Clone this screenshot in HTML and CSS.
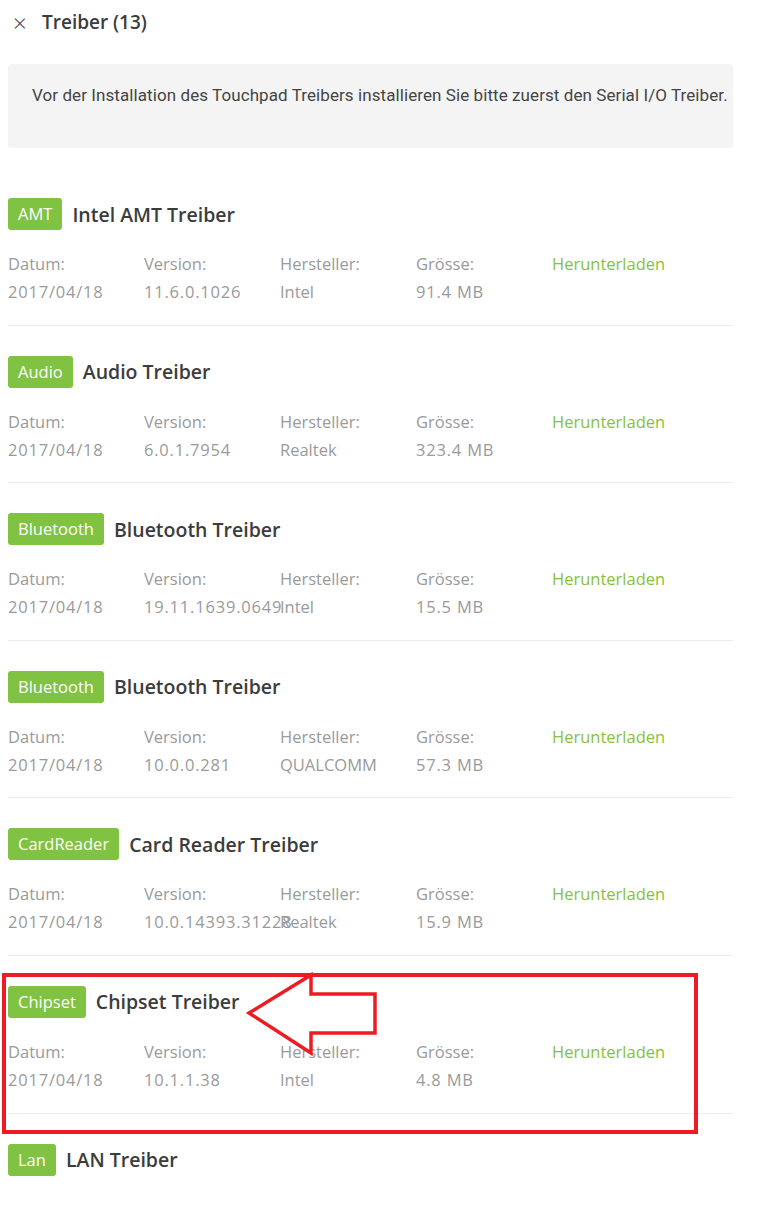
FILE: index.html
```html
<!DOCTYPE html>
<html lang="de">
<head>
    <meta charset="UTF-8">
    <meta name="viewport" content="width=device-width, initial-scale=1.0">
    <title>Treiber</title>
    <link rel="stylesheet" href="styles.css">
</head>
<body>
    <div class="container">
        <div class="header">
            <span class="close">&times;</span>
            <h1>Treiber (13)</h1>
        </div>

        <div class="notice">
            Vor der Installation des Touchpad Treibers installieren Sie bitte zuerst den Serial I/O Treiber.
        </div>

        <div id="driver-list"></div>
    </div>

    <!-- annotation overlay -->
    <svg class="annotation" width="770" height="1213" viewBox="0 0 770 1213">
        <rect x="4" y="975" width="692" height="157" fill="none" stroke="#ed1c24" stroke-width="4"/>
        <polygon points="249,1013 311,975 311,994 375,994 375,1033 311,1033 311,1053" fill="none" stroke="#ed1c24" stroke-width="3.5" stroke-linejoin="miter"/>
    </svg>

    <script>
        const drivers = [
            { tag: 'AMT', name: 'Intel AMT Treiber', date: '2017/04/18', version: '11.6.0.1026', vendor: 'Intel', size: '91.4 MB' },
            { tag: 'Audio', name: 'Audio Treiber', date: '2017/04/18', version: '6.0.1.7954', vendor: 'Realtek', size: '323.4 MB' },
            { tag: 'Bluetooth', name: 'Bluetooth Treiber', date: '2017/04/18', version: '19.11.1639.0649', vendor: 'Intel', size: '15.5 MB' },
            { tag: 'Bluetooth', name: 'Bluetooth Treiber', date: '2017/04/18', version: '10.0.0.281', vendor: 'QUALCOMM', size: '57.3 MB' },
            { tag: 'CardReader', name: 'Card Reader Treiber', date: '2017/04/18', version: '10.0.14393.31228', vendor: 'Realtek', size: '15.9 MB' },
            { tag: 'Chipset', name: 'Chipset Treiber', date: '2017/04/18', version: '10.1.1.38', vendor: 'Intel', size: '4.8 MB' },
            { tag: 'Lan', name: 'LAN Treiber' } // details below the fold
        ];

        function renderMeta(d) {
            if (!d.date) return '';
            return `
                <div class="meta">
                    <span class="label">Datum:</span>
                    <span class="label">Version:</span>
                    <span class="label">Hersteller:</span>
                    <span class="label">Grösse:</span>
                    <a class="download" href="#">Herunterladen</a>
                    <span class="value num">${d.date}</span>
                    <span class="value num">${d.version}</span>
                    <span class="value">${d.vendor}</span>
                    <span class="value num">${d.size}</span>
                    <span></span>
                </div>`;
        }

        function renderDrivers() {
            const list = document.getElementById('driver-list');
            list.innerHTML = drivers.map(d => `
                <div class="driver">
                    <div class="driver-head">
                        <span class="tag">${d.tag}</span>
                        <span class="driver-name">${d.name}</span>
                    </div>
                    ${renderMeta(d)}
                </div>
            `).join('');
        }

        renderDrivers();
    </script>
</body>
</html>
```

FILE: styles.css
```css
* {
    margin: 0;
    padding: 0;
    box-sizing: border-box;
}

body {
    font-family: "Open Sans", "Noto Sans", sans-serif;
    background: white;
    color: #3c3c3c;
    position: relative;
    height: 1213px;
    overflow: hidden;
}

.container {
    width: 725px;
    margin-left: 8px;
}

.header {
    display: flex;
    align-items: center;
    height: 44px;
    padding-left: 5px;
}

.close {
    font-size: 24px;
    font-weight: 300;
    color: #444;
    width: 29px;
    line-height: 1;
    margin-top: 2px;
}

.header h1 {
    font-size: 19px;
    font-weight: 600;
    color: #3c3c3c;
}

.notice {
    margin-top: 20px;
    height: 84px;
    background: #f4f4f4;
    border-radius: 3px;
    padding: 21px 0 0 24px;
    font-family: Roboto, sans-serif;
    font-size: 17px;
    letter-spacing: 0.08px;
    white-space: nowrap;
    color: #444;
    margin-bottom: 20px;
}

.driver {
    padding: 30px 0 18.6px;
    border-bottom: 1px solid #ebebeb;
}

.driver:last-child {
    border-bottom: none;
}

.driver-head {
    display: flex;
    align-items: center;
    gap: 10px;
    height: 32px;
}

.tag {
    background: #80c242;
    color: white;
    font-size: 16.5px;
    height: 32px;
    line-height: 31px;
    padding: 0 10px;
    border-radius: 3px;
}

.driver-name {
    font-size: 19.5px;
    font-weight: 600;
    color: #3c3c3c;
}

.meta {
    display: grid;
    grid-template-columns: 136px 136px 136px 136px 1fr;
    margin-top: 20px;
    font-size: 16.5px;
    line-height: 28px;
    white-space: nowrap;
}

.label,
.value {
    color: #9a9a9a;
}

.value.num {
    letter-spacing: 0.8px;
}

.download {
    color: #86c23a;
    text-decoration: none;
}

.annotation {
    position: absolute;
    top: 0;
    left: 0;
    pointer-events: none;
}
```
